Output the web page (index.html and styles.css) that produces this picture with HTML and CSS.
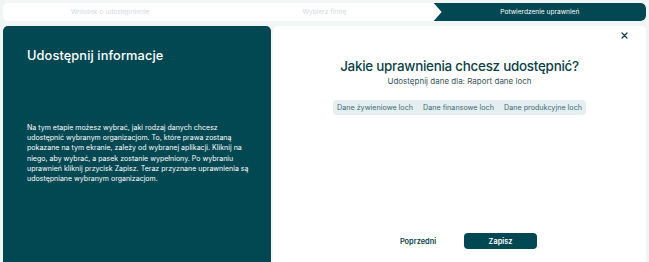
FILE: index.html
```html
<!DOCTYPE html>
<html lang="pl">
<head>
<meta charset="utf-8">
<link rel="stylesheet" href="styles.css">
</head>
<body>
<div class="page">
  <nav class="stepper">
    <div class="step">Wniosek o udostępnienie</div>
    <div class="step">Wybierz firmę</div>
    <div class="step active">Potwierdzenie uprawnień</div>
  </nav>
  <main class="content">
    <section class="info">
      <h1 class="info-title">Udostępnij informacje</h1>
      <p class="info-text">Na tym etapie możesz wybrać, jaki rodzaj danych chcesz<br>udostępnić wybranym organizacjom. To, które prawa zostaną<br>pokazane na tym ekranie, zależy od wybranej aplikacji. Kliknij na<br>niego, aby wybrać, a pasek zostanie wypełniony. Po wybraniu<br>uprawnień kliknij przycisk Zapisz. Teraz przyznane uprawnienia są<br>udostępniane wybranym organizacjom.</p>
    </section>
    <section class="panel">
      <div class="panel-top">
        <button class="close" aria-label="Zamknij">
          <svg width="7" height="7" viewBox="0 0 7 7"><path d="M1 1 L6 6 M6 1 L1 6" stroke="#0c3f47" stroke-width="1.2" stroke-linecap="round"/></svg>
        </button>
      </div>
      <h2 class="panel-title">Jakie uprawnienia chcesz udostępnić?</h2>
      <p class="panel-sub">Udostępnij dane dla: Raport dane loch</p>
      <div class="tags">
        <span class="tag">Dane żywieniowe loch</span>
        <span class="tag">Dane finansowe loch</span>
        <span class="tag">Dane produkcyjne loch</span>
      </div>
      <div class="actions">
        <button class="btn-link">Poprzedni</button>
        <button class="btn-primary">Zapisz</button>
      </div>
    </section>
  </main>
</div>
</body>
</html>
```

FILE: styles.css
```css
* { box-sizing: border-box; }
html, body { margin: 0; padding: 0; }
body {
  background: #f2f5f6;
  font-family: "Inter", "Open Sans", sans-serif;
  width: 649px;
  height: 262px;
  overflow: hidden;
}
.page {
  padding: 3px 3px 0 3px;
  display: flex;
  flex-direction: column;
  gap: 5px;
  height: 262px;
}
.stepper {
  display: grid;
  grid-template-columns: 1fr 1fr 1fr;
  height: 18px;
  background: #ffffff;
  border-radius: 5px;
  overflow: hidden;
}
.step {
  display: flex;
  align-items: center;
  justify-content: center;
  font-size: 6.6px;
  color: #d3d9db;
}
.step.active {
  background: #024852;
  color: #ffffff;
  clip-path: polygon(0 0, 100% 0, 100% 100%, 0 100%, 8px 50%);
  border-radius: 0 5px 5px 0;
  margin-left: 2px;
}
.content {
  flex: 1;
  display: flex;
  gap: 2px;
  min-height: 0;
}
.info {
  width: 268px;
  background: #024852;
  border-radius: 5px 5px 0 0;
  padding: 20px 6px 0 24px;
  color: #ffffff;
}
.info-title {
  margin: 0;
  font-size: 12.8px;
  font-weight: 500;
  line-height: 20px;
  letter-spacing: 0.1px;
}
.info-text {
  margin: 57px 0 0 0;
  font-size: 7px;
  line-height: 10.2px;
  font-weight: 400;
  letter-spacing: 0.02px;
}
.panel {
  flex: 1;
  background: #ffffff;
  border-radius: 5px 5px 0 0;
  display: flex;
  flex-direction: column;
  align-items: center;
}
.panel-top {
  align-self: stretch;
  display: flex;
  justify-content: flex-end;
  padding: 4px 17px 0 0;
  height: 17px;
}
.close {
  border: 0;
  background: none;
  padding: 0;
  width: 10px;
  height: 10px;
  display: flex;
  align-items: center;
  justify-content: center;
}
.panel-title {
  margin: 14px 0 0 0;
  font-size: 13.4px;
  font-weight: 500;
  letter-spacing: -0.25px;
  color: #0c3f47;
  line-height: 18px;
}
.panel-sub {
  margin: 0;
  font-size: 8px;
  color: #3a5559;
  line-height: 12px;
}
.tags {
  margin-top: 13px;
  display: flex;
  gap: 10px;
  background: #e5eff1;
  border-radius: 4px;
  padding: 0 4px;
  height: 15px;
  align-items: center;
}
.tag {
  font-size: 7.2px;
  color: #3b6a72;
}
.actions {
  margin-top: auto;
  margin-bottom: 13px;
  align-self: flex-start;
  margin-left: 126px;
  display: flex;
  align-items: center;
  gap: 27px;
}
.btn-link {
  border: 0;
  background: none;
  font-family: inherit;
  font-size: 7.4px;
  font-weight: 600;
  color: #0c3f47;
  padding: 0;
  width: 38px;
  text-align: center;
}
.btn-primary {
  border: 0;
  background: #024852;
  color: #ffffff;
  font-family: inherit;
  font-size: 7.4px;
  font-weight: 600;
  width: 73px;
  height: 16px;
  border-radius: 4px;
}
```
